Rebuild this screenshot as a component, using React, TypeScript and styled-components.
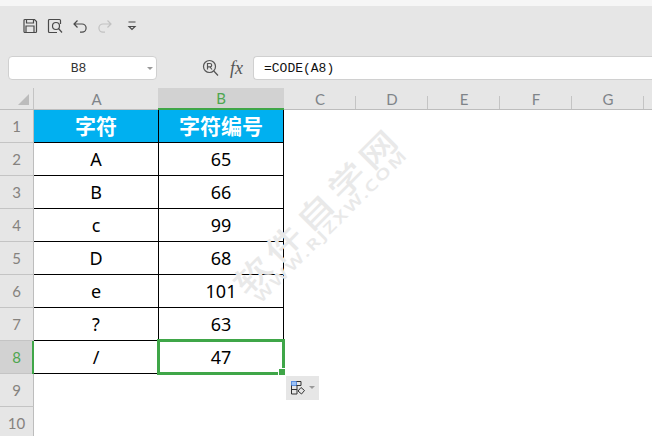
import React from 'react';
import styled, { createGlobalStyle } from 'styled-components';

const Global = createGlobalStyle`
  html, body { margin: 0; padding: 0; background: #fff; }
  body { font-family: "Noto Sans", "Noto Sans CJK SC", sans-serif; }
`;

const Page = styled.div`
  position: relative;
  width: 652px;
  height: 436px;
  overflow: hidden;
  background: #fff;
  display: flex;
  flex-direction: column;
`;
const TopStrip = styled.div`
  height: 6px;
  background: #f6f6f6;
  flex: none;
`;
const Ribbon = styled.div`
  height: 82px;
  flex: none;
  background: #e6e6e6;
  display: flex;
  flex-direction: column;
`;
const QuickBar = styled.div`
  height: 50px;
  display: flex;
  align-items: flex-start;
  padding: 12px 0 0 22px;
  box-sizing: border-box;
  gap: 9px;
`;
const QuickIcon = styled.svg`
  width: 16px;
  height: 16px;
  flex: none;
  fill: none;
  stroke: ${p => (p.$muted ? '#c2c2c2' : '#4a4a4a')};
  stroke-width: 1.2;
  margin-left: ${p => (p.$gapBefore ? '2px' : '0')};
`;
const FormulaRow = styled.div`
  display: flex;
  align-items: center;
  height: 24px;
  padding-left: 8px;
`;
const NameBox = styled.div`
  width: 149px;
  height: 24px;
  box-sizing: border-box;
  background: #fff;
  border: 1px solid #d0d0d0;
  border-radius: 4px;
  display: flex;
  align-items: center;
  justify-content: center;
  position: relative;
  font: 13px "Liberation Mono", "DejaVu Sans Mono", monospace;
  color: #333;
  padding-right: 8px;
`;
const Caret = styled.span`
  position: absolute;
  right: 3px;
  top: 10px;
  border: 3px solid transparent;
  border-top: 3px solid #999;
`;
const FormulaTools = styled.div`
  width: 96px;
  display: flex;
  align-items: center;
  padding-left: 45px;
  box-sizing: border-box;
  gap: 10px;
`;
const Fx = styled.span`
  font: italic 18px "Liberation Serif", serif;
  color: #555;
`;
const FormulaInput = styled.div`
  flex: 1;
  height: 24px;
  box-sizing: border-box;
  background: #fff;
  border: 1px solid #d0d0d0;
  border-right: none;
  border-radius: 4px 0 0 4px;
  padding-left: 10px;
  display: flex;
  align-items: center;
  font: 13px "Liberation Mono", "DejaVu Sans Mono", monospace;
  color: #111;
`;
const Spacer = styled.div`
  height: 8px;
`;
const Sheet = styled.div`
  display: grid;
  grid-template-columns: 34px 125px 125px 72px 72px 72px 72px 72px 8px;
  grid-template-rows: 22px repeat(10, 33px);
  flex: 1;
`;
const Corner = styled.div`
  background: #e6e6e6;
  border-right: 1px solid #c4c4c4;
  border-bottom: 1px solid #bdbdbd;
  position: relative;
  &::after {
    content: '';
    position: absolute;
    right: 4px;
    bottom: 4px;
    border-style: solid;
    border-width: 0 0 11px 11px;
    border-color: transparent transparent #bcbcbc transparent;
  }
`;
const ColHead = styled.div`
  background: ${p => (p.$active ? '#d2d2d2' : '#e6e6e6')};
  border-bottom: ${p => (p.$active ? '2px solid #3fa648' : '1px solid #bdbdbd')};
  margin-left: ${p => (p.$active ? '-1px' : '0')};
  box-sizing: border-box;
  position: relative;
  display: flex;
  align-items: center;
  justify-content: center;
  font: 15px "Lato", "Open Sans", sans-serif;
  color: ${p => (p.$active ? '#4ea64f' : '#7f8489')};
  &::after {
    content: ${p => (p.$divided ? "''" : 'none')};
    position: absolute;
    right: 0;
    top: 8px;
    bottom: 0;
    width: 1px;
    background: #c4c4c4;
  }
`;
const RowHead = styled.div`
  background: ${p => (p.$active ? '#d2d2d2' : '#e6e6e6')};
  border-right: 1px solid #bdbdbd;
  border-bottom: 1px solid #c4c4c4;
  box-sizing: border-box;
  display: flex;
  align-items: center;
  justify-content: center;
  font: 15px "Lato", "Open Sans", sans-serif;
  color: ${p => (p.$active ? '#4ea64f' : '#85827e')};
`;
const Cell = styled.div`
  position: relative;
  box-sizing: border-box;
  background: ${p => (p.$head ? '#00b0f0' : '#fff')};
  color: ${p => (p.$head ? '#fff' : '#000')};
  border-right: 1px solid #000;
  border-bottom: 1px solid #000;
  display: flex;
  align-items: center;
  justify-content: center;
  font-family: "Noto Sans", "Noto Sans CJK SC", sans-serif;
  font-size: ${p => (p.$head ? '21px' : '18px')};
  font-weight: ${p => (p.$head ? 700 : 400)};
  line-height: 1;
`;
const Blank = styled.div`
  grid-column: ${p => (p.$full ? '2 / -1' : '4 / -1')};
  background: #fff;
`;
const Selection = styled.div`
  position: absolute;
  inset: -2px -2px -2px -2px;
  border: 3px solid #3fa648;
  pointer-events: none;
`;
const FillHandle = styled.span`
  position: absolute;
  right: -4px;
  bottom: -4px;
  width: 6px;
  height: 6px;
  background: #3fa648;
  border: 1px solid #fff;
  box-sizing: content-box;
`;
const RowMark = styled.span`
  position: absolute;
  left: -2px;
  top: 0;
  bottom: -1px;
  width: 2px;
  background: #3fa648;
`;
const PasteButton = styled.div`
  position: absolute;
  left: 127px;
  top: 35px;
  width: 33px;
  height: 24px;
  background: #e6e6e6;
  display: flex;
  align-items: center;
  padding-left: 5px;
  box-sizing: border-box;
  gap: 4px;
`;
const SmallCaret = styled.span`
  border: 3px solid transparent;
  border-top: 3px solid #999;
  margin-top: 2px;
`;
const Watermark = styled.div`
  position: absolute;
  left: 307px;
  top: 201px;
  width: 0;
  height: 0;
  transform: rotate(-45deg);
  pointer-events: none;
  display: flex;
  flex-direction: column;
  align-items: center;
`;
const WaterLine = styled.div`
  flex: none;
  white-space: nowrap;
  color: #e9e9e9;
  font-family: ${p => (p.$big ? '"Noto Sans CJK SC"' : '"Noto Sans"')}, sans-serif;
  font-weight: ${p => (p.$big ? 500 : 600)};
  font-size: ${p => (p.$big ? '30px' : '15px')};
  letter-spacing: ${p => (p.$big ? '4.2px' : '1.9px')};
  line-height: ${p => (p.$big ? '24px' : '20px')};
  transform: scaleX(${p => (p.$big ? 1.3 : 1.35)});
`;

const rows: [string, string][] = [
  ['A', '65'], ['B', '66'], ['c', '99'], ['D', '68'],
  ['e', '101'], ['?', '63'], ['/', '47'],
];
const cols = ['C', 'D', 'E', 'F', 'G'];

export default function App() {
  return (
    <Page>
      <Global />
      <TopStrip />
      <Ribbon>
        <QuickBar>
          <QuickIcon viewBox="0 0 16 16">
            <path d="M2 2.500A1 1 0 0 1 3 1.500h9.500l2 2V13.500a1 1 0 0 1-1 1H3a1 1 0 0 1-1-1z" />
            <path d="M4.500 1.500V5h7V1.500M4 14.500V8h8v6.500" />
          </QuickIcon>
          <QuickIcon viewBox="0 0 16 16">
            <path d="M10 14.500H2.500a1 1 0 0 1-1-1V2.500a1 1 0 0 1 1-1h10a1 1 0 0 1 1 1V6" />
            <circle cx="9" cy="8" r="3.500" />
            <path d="M11.500 10.500L15 14.500" />
          </QuickIcon>
          <QuickIcon viewBox="0 0 16 16">
            <path d="M5.500 2.500L2 6l3.500 3.500M2 6h8a3.800 3.800 0 0 1 0 8.200H8" />
          </QuickIcon>
          <QuickIcon viewBox="0 0 16 16" $muted>
            <path d="M10.500 2.500L14 6l-3.500 3.500M14 6H6a3.800 3.800 0 0 0 0 8.200h2" />
          </QuickIcon>
          <QuickIcon viewBox="0 0 16 16" $gapBefore>
            <path d="M4.500 4h7M5 8.500l3 3 3-3z" />
          </QuickIcon>
        </QuickBar>
        <FormulaRow>
          <NameBox>B8<Caret /></NameBox>
          <FormulaTools>
            <svg width="18" height="18" viewBox="0 0 18 18" fill="none" stroke="#555" strokeWidth="1.200">
              <circle cx="7.500" cy="7.500" r="6" />
              <path d="M5.500 10.500v-6h2.500a1.600 1.600 0 0 1 0 3.400H5.500M8 8l2 2.500M11.800 12l4.200 4.500" />
            </svg>
            <Fx>fx</Fx>
          </FormulaTools>
          <FormulaInput>=CODE(A8)</FormulaInput>
        </FormulaRow>
        <Spacer />
      </Ribbon>
      <Sheet>
        <Corner />
        <ColHead>A</ColHead>
        <ColHead $active>B</ColHead>
        {cols.map(c => <ColHead key={c} $divided>{c}</ColHead>)}
        <ColHead />
        <RowHead>1</RowHead>
        <Cell $head>字符</Cell>
        <Cell $head>字符编号</Cell>
        <Blank />
        {rows.map(([a, b], i) => {
          const last = i === rows.length - 1;
          return (
            <React.Fragment key={i}>
              <RowHead $active={last}>{i + 2}</RowHead>
              <Cell>{last && <RowMark />}{a}</Cell>
              <Cell>
                {b}
                {last && (
                  <Selection>
                    <FillHandle />
                  </Selection>
                )}
                {last && (
                  <PasteButton>
                    <svg width="14" height="14" viewBox="0 0 14 14" fill="none" stroke="#333" strokeWidth="1">
                      <rect x="0.500" y="0.500" width="5" height="4" fill="#9cc2f5" stroke="#5b8fe0" />
                      <path d="M5.500 0.500h4.500v4H5.500M0.500 4.500v8.500h5.500V4.500M0.500 8.500h5.500" />
                      <path d="M10 6.500l3.500 3-3 3.500-3.500-3z" />
                    </svg>
                    <SmallCaret />
                  </PasteButton>
                )}
              </Cell>
              <Blank />
            </React.Fragment>
          );
        })}
        <RowHead>9</RowHead>
        <Blank $full />
        <RowHead>10</RowHead>
        <Blank $full />
      </Sheet>
      <Watermark>
        <WaterLine $big>软件自学网</WaterLine>
        <WaterLine>WWW.RJZXW.COM</WaterLine>
      </Watermark>
    </Page>
  );
}
